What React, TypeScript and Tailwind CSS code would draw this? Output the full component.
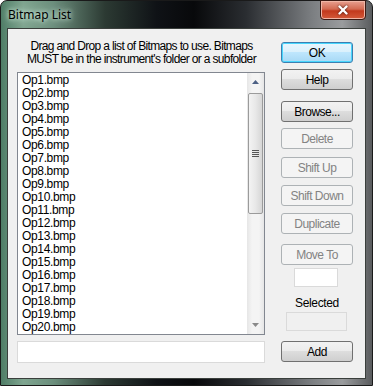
import { X } from 'lucide-react';

const items = Array.from({ length: 20 }, (_, i) => `Op${i + 1}.bmp`);

const ui = "font-['Liberation_Sans',Arial,sans-serif] text-[12px] tracking-[-0.35px]";

function Btn({ label, top, disabled, primary }: { label: string; top: number; disabled?: boolean; primary?: boolean }) {
  let cls = 'border-[#707070] bg-[linear-gradient(#f2f2f2_0%,#ebebeb_50%,#dddddd_50%,#cfcfcf_100%)] text-black';
  if (primary) cls = 'border-[#3c7fb1] bg-[linear-gradient(#eaf6fd_0%,#d9f0fc_50%,#bee6fd_50%,#a7d9f5_100%)] text-black shadow-[inset_0_0_0_1px_#48d6fd]';
  if (disabled) cls = 'border-[#adb2b5] bg-[#f4f4f4] text-[#838383]';
  return (
    <div
      className={`h-[21px] w-[72px] rounded-[3px] border flex items-center justify-center leading-none tracking-[-0.5px] ${cls}`}
      style={{ marginTop: top }}
    >
      {label}
    </div>
  );
}

export default function App() {
  return (
    <div className="w-[373px] h-[386px] overflow-hidden bg-white">
      <div className="w-[373px] h-[386px] flex flex-col rounded-t-[7px] border border-[#1a1a1a] bg-[linear-gradient(90deg,#4f7d66_0%,#7fa590_6%,#6c8f7d_14%,#2c3a33_28%,#0f1216_42%,#08090b_52%,#2a2d31_66%,#7c7f82_84%,#9a9c9e_92%,#5a5c5e_100%)]">
        <div className="h-[27px] flex items-start">
          <div className="pl-[7px] pt-[6px] text-[12px] leading-[16px] text-black font-['Noto_Sans',sans-serif] [text-shadow:0_0_8px_#d6f0e0,0_0_4px_#d6f0e0]">
            Bitmap List
          </div>
          <div className="ml-auto mr-[6px] -mt-px w-[46px] h-[20px] rounded-b-[4px] border border-[#3b1a14] bg-[linear-gradient(#e8a090_0%,#d36a52_45%,#c2391d_55%,#d45a3a_100%)] flex items-center justify-center shadow-[inset_0_0_0_1px_#f0b6a6]">
            <X size={14} strokeWidth={4} className="text-white drop-shadow-[0_0_1px_#3a1008]" />
          </div>
        </div>
        <div className={`mx-[6px] mb-[6px] flex-1 border border-[#3a3f3c] bg-[#f0f0f0] flex ${ui}`}>
          <div className="pl-[9px] w-[258px] flex flex-col">
            <div className="mt-[11px] h-[26px] text-center leading-[13px] text-black tracking-[-0.65px]">
              Drag and Drop a list of Bitmaps to use. Bitmaps
              <br />
              MUST be in the instrument&apos;s folder or a subfolder
            </div>
            <div className="mt-[6px] w-[248px] h-[263px] border border-[#828790] bg-white flex">
              <div className="flex-1 overflow-hidden pl-[4px] pt-[1px] leading-[13px] text-black">
                {items.map((it) => (
                  <div key={it} className="h-[13px]">
                    {it}
                  </div>
                ))}
              </div>
              <div className="w-[17px] bg-[#f0f0f0] bg-[linear-gradient(90deg,#e6e6e6,#f4f4f4_30%,#f4f4f4_70%,#e6e6e6)] flex flex-col items-center">
                <div className="h-[18px] flex items-center justify-center">
                  <svg width="7" height="4" viewBox="0 0 7 4">
                    <path d="M0 4 L3.5 0 L7 4 Z" fill="#4d6185" />
                  </svg>
                </div>
                <div className="mt-[2px] w-[15px] h-[121px] rounded-[2px] border border-[#9b9b9b] bg-[linear-gradient(90deg,#f3f3f3,#e8e8e8_50%,#d6d6d6)] flex items-center justify-center">
                  <svg width="7" height="8" viewBox="0 0 7 8">
                    <path d="M0 0.5h7M0 2.5h7M0 4.5h7M0 6.5h7" stroke="#555" strokeWidth="1" />
                  </svg>
                </div>
                <div className="flex-1" />
                <div className="h-[18px] flex items-center justify-center">
                  <svg width="7" height="4" viewBox="0 0 7 4">
                    <path d="M0 0 L3.5 4 L7 0 Z" fill="#8a8a8a" />
                  </svg>
                </div>
              </div>
            </div>
            <div className="mt-[6px] w-[248px] h-[22px] border border-[#dadada] bg-white" />
          </div>
          <div className="pl-[15px] flex flex-col items-start">
            <Btn label="OK" top={13} primary />
            <Btn label="Help" top={6} />
            <Btn label="Browse..." top={11} />
            <Btn label="Delete" top={6} disabled />
            <Btn label="Shift Up" top={8} disabled />
            <Btn label="Shift Down" top={7} disabled />
            <Btn label="Duplicate" top={7} disabled />
            <Btn label="Move To" top={10} disabled />
            <div className="ml-[13px] mt-[3px] w-[44px] h-[19px] border border-[#dadada] bg-white" />
            <div className="mt-[10px] w-[72px] text-center leading-[13px] text-black">Selected</div>
            <div className="ml-[5px] mt-[2px] w-[61px] h-[19px] border border-[#dadada] bg-[#f0f0f0]" />
            <Btn label="Add" top={10} />
          </div>
        </div>
      </div>
    </div>
  );
}
